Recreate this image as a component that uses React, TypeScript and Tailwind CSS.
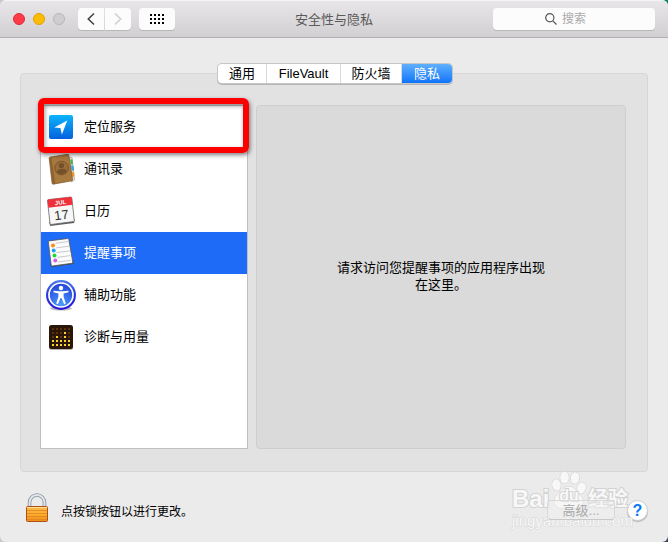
import { useState } from "react";
import type { ReactNode } from "react";
import clsx from "clsx";

function LocationIcon() {
  return (
    <svg viewBox="0 0 32 32" className="size-8 shrink-0" aria-hidden="true">
      <defs>
        <linearGradient id="loc" x1="0" y1="0" x2="0" y2="1">
          <stop offset="0" stopColor="#0cb4fd" />
          <stop offset="1" stopColor="#0461dc" />
        </linearGradient>
      </defs>
      <rect x="4" y="4" width="24" height="24" rx="2" fill="url(#loc)" />
      <path d="M22.300 9.500 9.200 16.500l6.200.4 1.500 6.600z" fill="#fff" />
    </svg>
  );
}

function ContactsIcon() {
  return (
    <svg viewBox="0 0 32 32" className="size-8 shrink-0" aria-hidden="true">
      <path d="M24 4l3 .5 2.600 22.500-3 2z" fill="#e9e6df" stroke="#888" strokeWidth=".5" />
      <path d="M25.200 6.500l2.200-.2.700 5-2.300.3z" fill="#4cb04c" />
      <path d="M26 12.600l2.400-.2.700 5.200-2.400.2z" fill="#39a5dc" />
      <path d="M26.800 19l2.200-.2.600 4.600-2.300.3z" fill="#ef9b2e" />
      <path d="M4.200 5.400Q4 4.400 5 4.100L22.600 1.300q1-.2 1.200.8L27.600 26.600q.1 1-.8 1.200L8.300 31.200q-1 .1-1.200-.8z" fill="#a8793f" stroke="#7c5426" strokeWidth=".7" />
      <path d="M4.500 5.200l2-.3 3.900 25.500-2.800.5z" fill="#8e6230" />
      <circle cx="16.600" cy="15" r="6.800" fill="#9b6e38" stroke="#74502a" strokeWidth=".9" />
      <circle cx="16.400" cy="12.600" r="2.700" fill="#74502a" />
      <path d="M11.700 19q1-2.800 3.600-3l2.600-.2q2.700 0 4 2.200-1.800 3-4.900 3.200-3.300.2-5.300-2.200z" fill="#74502a" />
    </svg>
  );
}

function CalendarIcon() {
  return (
    <svg viewBox="0 0 32 32" className="size-8 shrink-0" aria-hidden="true">
      <path d="M4 27l1.200 3.900 24-2.800.4-4z" fill="#444" opacity=".85" />
      <path d="M2.500 5.700q-.1-1 .9-1.100L25.600 2q1-.1 1.200.9L29.300 25.500q.1 1-.9 1.100L6.100 29.500q-1 .1-1.100-.9z" fill="#f7f7f7" stroke="#666" strokeWidth=".8" />
      <path d="M2.500 5.700q-.1-1 .9-1.100L25.600 2q1-.1 1.200.9L27.500 9.800 3.400 12.800z" fill="#f0303b" />
      <g transform="rotate(-7 16 16)" textAnchor="middle" fontFamily="Liberation Sans, sans-serif">
        <text x="16.500" y="9.500" fontSize="6" fontWeight="700" fill="#fff">JUL</text>
        <text x="16" y="24.500" fontSize="13" fill="#333">17</text>
      </g>
    </svg>
  );
}

function RemindersIcon() {
  return (
    <svg viewBox="0 0 32 32" className="size-8 shrink-0" aria-hidden="true">
      <path d="M5 27l1.800 3 21.500-2.900.3-3z" fill="#444" />
      <path d="M3.300 5q-.1-1 .9-1.100L22.700 1.500q1-.1 1.100.9L27.800 25.200q.1 1-.9 1.100L7.300 29q-1 .1-1.100-.9z" fill="#fbfbfb" stroke="#555" strokeWidth=".8" />
      <g stroke="#b5b5b5" strokeWidth=".7">
        <path d="M10.500 6.200l12.600-1.600M11 10.900l13-1.700M11.500 15.600l13.300-1.700M12.200 20.300l13.300-1.700M13 25l13-1.700" />
      </g>
      <circle cx="8" cy="8.400" r="2" fill="#ff8a1c" />
      <circle cx="8.700" cy="13.500" r="2" fill="#1aa6f0" />
      <circle cx="9.500" cy="18.600" r="2" fill="#24d93b" />
      <circle cx="10.300" cy="23.500" r="2" fill="#cf62dd" />
    </svg>
  );
}

function AccessibilityIcon() {
  return (
    <svg viewBox="0 0 32 32" className="size-8 shrink-0" aria-hidden="true">
      <defs>
        <linearGradient id="acc" x1="0" y1="0" x2="0" y2="1">
          <stop offset="0" stopColor="#4a7be8" />
          <stop offset=".45" stopColor="#2b3fe0" />
          <stop offset="1" stopColor="#2a10d8" />
        </linearGradient>
        <radialGradient id="accIn" cx=".5" cy=".9" r=".9">
          <stop offset="0" stopColor="#4a9cff" />
          <stop offset="1" stopColor="#2342d8" />
        </radialGradient>
      </defs>
      <ellipse cx="16" cy="29.500" rx="11" ry="2" fill="#000" opacity=".25" />
      <circle cx="16" cy="16" r="15" fill="url(#acc)" />
      <circle cx="16" cy="16" r="12" fill="url(#accIn)" stroke="#fff" strokeWidth="1.700" />
      <circle cx="16" cy="9" r="2.200" fill="#fff" />
      <path d="M8.600 11.700l5.400.6h4l5.400-.6.2 1.500-5 1.200v3.400l2.200 6.800-1.700.6L16.500 19h-1l-2.600 6.200-1.700-.6 2.200-6.800v-3.400l-5-1.200z" fill="#fff" />
    </svg>
  );
}

// Lit height of each column of the LED meter, counted from the bottom row
const levels = [2, 3, 2, 4, 2];

function DiagnosticsIcon() {
  return (
    <svg viewBox="0 0 32 32" className="size-8 shrink-0" aria-hidden="true">
      <rect x="4" y="5" width="24" height="24" rx="2.500" fill="#000" opacity=".3" />
      <rect x="4" y="4" width="24" height="24" rx="2.500" fill="#2a1608" />
      {levels.map((level, col) =>
        [0, 1, 2, 3, 4].map((row) => (
          <rect
            key={`${col}-${row}`}
            x={7 + col * 4}
            y={23 - row * 4}
            width="2"
            height="2"
            fill={row < level ? "#fbd52c" : "#5a3108"}
          />
        ))
      )}
    </svg>
  );
}

function LockIcon() {
  return (
    <svg viewBox="0 0 24 30" className="h-[30px] w-6" aria-hidden="true">
      <defs>
        <linearGradient id="body" x1="0" y1="0" x2="0" y2="1">
          <stop offset="0" stopColor="#f9b94c" />
          <stop offset=".5" stopColor="#ffae2b" />
          <stop offset="1" stopColor="#f08a1c" />
        </linearGradient>
      </defs>
      <path d="M4.500 14V9.500a7.500 7.500 0 0 1 15 0V14" fill="none" stroke="#87909a" strokeWidth="3.600" />
      <path d="M4.500 14V9.500a7.500 7.500 0 0 1 15 0V14" fill="none" stroke="#dfe5ea" strokeWidth="2" />
      <rect x="1.500" y="13.500" width="21" height="15" rx="1" fill="url(#body)" stroke="#ae4f14" />
      <path d="M2 14.500h20" stroke="#ffdf94" />
      <path d="M2 17.500h20M2 20.500h20M2 23.500h20M2 26.500h20" stroke="#dd8521" strokeWidth=".8" />
    </svg>
  );
}

function Watermark() {
  return (
    <div className="pointer-events-none absolute right-[38px] bottom-3 w-[118px] text-[#f8f8f8]">
      <div className="flex h-[42px] items-end leading-[26px] font-bold [-webkit-text-stroke:2px_#d2d2d2] [paint-order:stroke_fill]">
        <span className="w-[38px] text-2xl leading-[26px]">Bai</span>
        <span className="relative h-[42px] w-[38px] shrink-0 text-center">
          <svg viewBox="0 0 38 42" className="absolute inset-0" aria-hidden="true">
            <g fill="#f8f8f8" stroke="#cdcdcd">
              <ellipse cx="6.500" cy="15" rx="4.300" ry="5.800" transform="rotate(-10 6.500 15)" />
              <ellipse cx="14.500" cy="7.500" rx="4.300" ry="6" />
              <ellipse cx="25" cy="8" rx="4.300" ry="5.800" transform="rotate(8 25 8)" />
              <ellipse cx="31.500" cy="18" rx="4.300" ry="5.800" transform="rotate(15 31.500 18)" />
              <path d="M19 16.500c5 0 7 5 11 8.500s5 11-3 13c-3 .4-5-1-8-1s-6 1.400-9 1C3 37 3 29 7 25s7-8.500 12-8.500z" />
            </g>
          </svg>
          <span className="relative top-3.5 text-base">du</span>
        </span>
        <span className="shrink-0 text-xl leading-[26px]">经验</span>
      </div>
      <div className="text-[15px] leading-[18px] whitespace-nowrap [-webkit-text-stroke:1px_#d6d6d6] [paint-order:stroke_fill]">
        jingyan.baidu.com
      </div>
    </div>
  );
}

const services: { name: string; icon: ReactNode; marked?: boolean }[] = [
  { name: "定位服务", icon: <LocationIcon />, marked: true },
  { name: "通讯录", icon: <ContactsIcon /> },
  { name: "日历", icon: <CalendarIcon /> },
  { name: "提醒事项", icon: <RemindersIcon /> },
  { name: "辅助功能", icon: <AccessibilityIcon /> },
  { name: "诊断与用量", icon: <DiagnosticsIcon /> },
];

const tabs = [
  { name: "通用", width: "w-[49px]" },
  { name: "FileVault", width: "w-[74px]" },
  { name: "防火墙", width: "w-[61px]" },
  { name: "隐私", width: "w-[50px]" },
];

const toolButton = "flex h-[22px] items-center justify-center bg-[#fcfcfc] shadow-[0_1px_0_#b9b7b9]";

function TitleBar() {
  return (
    <header className="grid h-[38px] grid-cols-[1fr_auto_1fr] items-center border-t border-b border-t-[#f5f4f5] border-b-[#b1afb1] bg-linear-to-b from-[#e8e6e8] to-[#d1cfd1] px-[13px]">
      <div className="flex items-center">
        <div className="flex gap-2">
          <button aria-label="关闭" className="size-3 rounded-full border border-[#e2293a] bg-[#fc3b47]" />
          <button aria-label="最小化" className="size-3 rounded-full border border-[#e4a000] bg-[#fdbc04]" />
          <button aria-label="缩放" className="size-3 rounded-full border border-[#b8b6b8] bg-[#cfcdcf]" />
        </div>
        <div className="ml-[13px] flex gap-px">
          <button aria-label="后退" className={clsx(toolButton, "w-[26px] rounded-l")}>
            <svg viewBox="0 0 8 14" className="h-3.5 w-2" fill="none" stroke="#444" strokeWidth="1.600">
              <path d="M7 1.500 1.300 7 7 12.500" />
            </svg>
          </button>
          <button aria-label="前进" className={clsx(toolButton, "w-[26px] rounded-r")}>
            <svg viewBox="0 0 8 14" className="h-3.5 w-2" fill="none" stroke="#d0d0d0" strokeWidth="1.600">
              <path d="M1 1.500 6.700 7 1 12.500" />
            </svg>
          </button>
        </div>
        <button aria-label="显示全部" className={clsx(toolButton, "ml-2 w-9 rounded")}>
          <svg viewBox="0 0 14 10" className="h-2.5 w-3.5" fill="#000">
            {[0, 4, 8, 12].map((x) => [0, 4, 8].map((y) => <rect key={`${x}-${y}`} x={x} y={y} width="2" height="2" />))}
          </svg>
        </button>
      </div>
      <h1 className="text-[#5b5a5b]">安全性与隐私</h1>
      <label className="flex h-[22px] w-[162px] items-center justify-self-end rounded bg-[#fcfcfc] shadow-[0_1px_0_#b9b7b9]">
        <svg viewBox="0 0 12 12" className="ml-[52px] size-3 shrink-0" fill="none" stroke="#555" strokeWidth="1.200">
          <circle cx="4.800" cy="4.800" r="4.100" />
          <path d="M7.800 7.800 11.500 11.500" />
        </svg>
        <input
          type="text"
          aria-label="搜索"
          placeholder="搜索"
          className="ml-[5px] w-full min-w-0 bg-transparent text-xs outline-none placeholder:text-[#aaa]"
        />
      </label>
    </header>
  );
}

export default function App() {
  const [tab, setTab] = useState("隐私");
  const [selected, setSelected] = useState("提醒事项");

  return (
    <div className="min-h-screen bg-[linear-gradient(to_right,#c9c9c9_50%,transparent_50%),linear-gradient(#0a8560,#34445c)] font-['Liberation_Sans','Noto_Sans_CJK_SC',sans-serif] text-[13px] leading-[17px] text-black">
      <div className="flex min-h-screen flex-col overflow-hidden rounded-md bg-[#ebebeb]">
        <TitleBar />

        <main className="flex flex-1 flex-col px-5 pt-[26px]">
          <div
            role="tablist"
            className="relative ml-0.5 flex self-center overflow-hidden rounded-[4px] bg-white shadow-[0_0_0_1px_#c6c6c6,0_1px_0_1px_#b5b5b5]"
          >
            {tabs.map(({ name, width }) => (
              <button
                key={name}
                role="tab"
                aria-selected={tab === name}
                onClick={() => setTab(name)}
                className={clsx(
                  "h-[19px] border-r border-[#d9d9d9] last:border-r-0",
                  width,
                  tab === name && "bg-linear-to-b from-[#5eaffb] to-[#0a73fb] text-white"
                )}
              >
                {name}
              </button>
            ))}
          </div>

          <div className="-mt-[10px] flex flex-1 gap-2 rounded border border-[#d6d6d6] bg-[#e2e2e2] pt-[31px] pr-[21px] pb-[22px] pl-[19px]">
            <ul className="w-52 shrink-0 border border-[#c0c0c0] bg-white">
              {services.map(({ name, icon, marked }) => (
                <li key={name} className="relative">
                  <button
                    onClick={() => setSelected(name)}
                    className={clsx(
                      "flex h-[42px] w-full items-center gap-[7px] pl-1 text-left",
                      selected === name && "bg-[#1e6bf7] text-white"
                    )}
                  >
                    {icon}
                    <span className="pb-0.5">{name}</span>
                  </button>
                  {marked && (
                    <div className="pointer-events-none absolute -top-2 -right-0.5 -bottom-[5px] -left-[3px] z-10 rounded-md border-6 border-[#fe0000] shadow-[1px_2px_4px_rgba(0,0,0,0.5),inset_1px_2px_4px_rgba(0,0,0,0.4)]" />
                  )}
                </li>
              ))}
            </ul>
            <section className="flex flex-1 items-center justify-center rounded border border-[#cecece] bg-[#dadada] pb-0.5">
              <p className="w-[210px] text-center">请求访问您提醒事项的应用程序出现在这里。</p>
            </section>
          </div>
        </main>

        <footer className="relative flex h-[70px] items-center pt-1.5 pr-5 pl-[25px]">
          <button aria-label="解锁" className="mb-1">
            <LockIcon />
          </button>
          <span className="ml-3 pt-1 text-xs">点按锁按钮以进行更改。</span>
          <Watermark />
          <button
            disabled
            className="relative ml-auto h-5 w-[68px] rounded border border-[#d8d8d8] border-b-[#c8c8c8] bg-[#f3f3f3]/40 text-[#a8a8a8]"
          >
            高级...
          </button>
          <button
            aria-label="帮助"
            className="ml-3 size-[21px] rounded-full border border-[#cfcfcf] bg-white text-base leading-[19px] font-bold text-[#0a78f5] shadow-[0_1px_1px_rgba(0,0,0,0.25)]"
          >
            ?
          </button>
        </footer>
      </div>
    </div>
  );
}
